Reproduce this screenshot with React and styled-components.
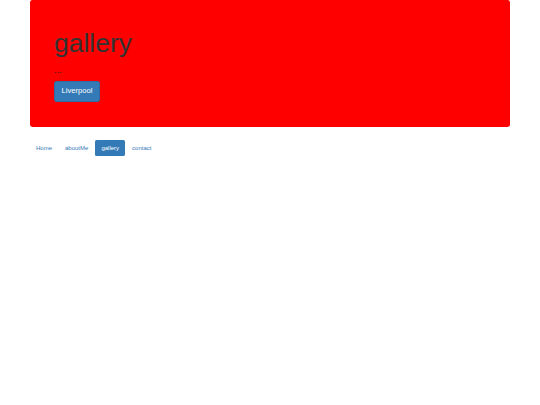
import React from 'react';
import styled, { createGlobalStyle } from 'styled-components';

const GlobalStyle = createGlobalStyle`
  html, body {
    margin: 0;
    padding: 0;
    background: #fff;
  }
  body {
    font-family: "Liberation Sans", Arial, Helvetica, sans-serif;
    color: #333;
  }
`;

const Container = styled.div`
  width: 480px;
  margin: 0 auto;
`;

const Jumbotron = styled.div`
  background-color: #ff0000;
  border-radius: 2.4px;
  padding: 19px 24px 25px;
  margin-bottom: 13px;
`;

const Heading = styled.h1`
  margin: 10px 0 5px;
  font-size: 26.5px;
  font-weight: 500;
  line-height: 1.1;
  color: #333;
`;

const Lead = styled.p`
  margin: 0 0 3px;
  font-size: 9.5px;
  line-height: 13px;
  color: #222;
`;

const Actions = styled.p`
  margin: 0;
`;

const Button = styled.a`
  display: inline-block;
  padding: 4.5px 6.6px;
  font-size: 7.6px;
  line-height: 1.3333;
  border-radius: 2.4px;
  color: #fff;
  background-color: #337ab7;
  border: 0.4px solid #2e6da4;
  text-decoration: none;
  cursor: pointer;
`;

const Pills = styled.ul`
  display: flex;
  gap: 1px;
  list-style: none;
  margin: 0;
  padding: 0;
`;

const PillLink = styled.a`
  display: block;
  padding: 4px 6px;
  font-size: 6px;
  line-height: 8px;
  border-radius: 1.6px;
  text-decoration: none;
  color: ${(p) => (p.$active ? '#fff' : '#337ab7')};
  background-color: ${(p) => (p.$active ? '#337ab7' : 'transparent')};
`;

const links = ['Home', 'aboutMe', 'gallery', 'contact'];

const App = () => (
  <>
    <GlobalStyle />
    <Container>
      <Jumbotron>
        <Heading>gallery</Heading>
        <Lead>...</Lead>
        <Actions>
          <Button href="#">Liverpool</Button>
        </Actions>
      </Jumbotron>
      <Pills>
        {links.map((l) => (
          <li key={l}>
            <PillLink href="#" $active={l === 'gallery'}>{l}</PillLink>
          </li>
        ))}
      </Pills>
    </Container>
  </>
);

export default App;
